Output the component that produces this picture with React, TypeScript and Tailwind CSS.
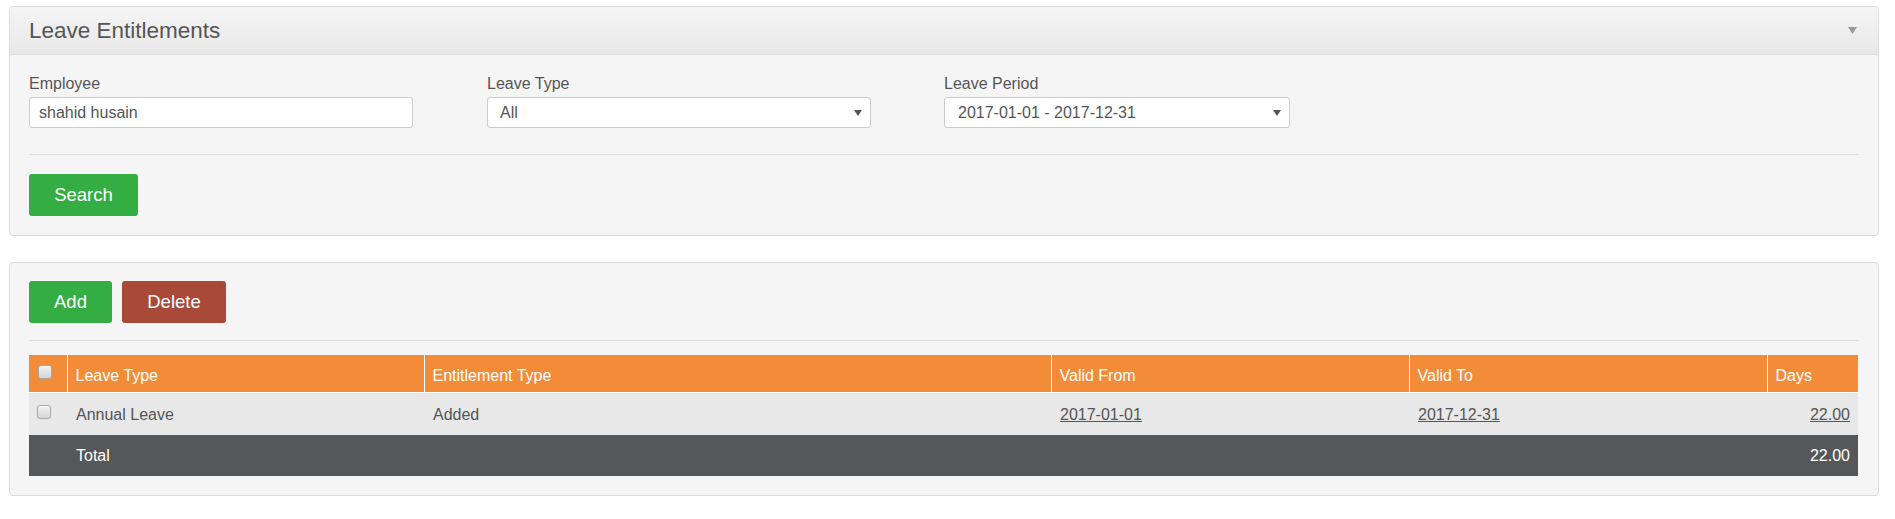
import React from "react";

const Tri = ({ w, h, color }: { w: number; h: number; color: string }) => (
  <svg width={w} height={h} viewBox={`0 0 ${w} ${h}`} className="block">
    <polygon points={`0,0 ${w},0 ${w / 2},${h}`} fill={color} />
  </svg>
);

const Check = () => (
  <span className="inline-block w-[14px] h-[14px] rounded-[3px] border border-[#a8a8a8] bg-gradient-to-b from-[#f0f0f0] to-[#d6d6d6] shadow-[inset_0_1px_1px_rgba(255,255,255,0.7)]" />
);

export default function App() {
  return (
    <div className="w-[1895px] h-[519px] bg-white font-['Liberation_Sans',Arial,sans-serif] text-[#555]">
      <div className="ml-[9px] pt-[6px] w-[1870px]">
        {/* Panel 1 */}
        <div className="border border-[#dcdcdc] rounded-[4px] bg-[#f5f5f5]">
          <div className="h-[48px] bg-gradient-to-b from-[#f5f5f5] to-[#e8e8e8] border-b border-[#dcdcdc] rounded-t-[4px] flex items-center justify-between pl-[19px] pr-[21px]">
            <span className="text-[22.5px] text-[#555] leading-none pt-[2px]">Leave Entitlements</span>
            <Tri w={9} h={7} color="#9a9a9a" />
          </div>
          <div className="px-[19px] pt-[19px] pb-[19px]">
            <div className="flex">
              <div className="w-[458px]">
                <div className="text-[16px] leading-[20px] mb-[3px]">Employee</div>
                <div className="w-[384px] h-[31px] bg-white border border-[#ccc] rounded-[3px] flex items-center pl-[9px] text-[16px] text-[#555]">
                  shahid husain
                </div>
              </div>
              <div className="w-[457px]">
                <div className="text-[16px] leading-[20px] mb-[3px]">Leave Type</div>
                <div className="w-[384px] h-[31px] bg-white border border-[#ccc] rounded-[3px] flex items-center justify-between pl-[12px] pr-[8px] text-[16px] text-[#555]">
                  <span>All</span>
                  <Tri w={8} h={6} color="#555" />
                </div>
              </div>
              <div className="w-[346px]">
                <div className="text-[16px] leading-[20px] mb-[3px]">Leave Period</div>
                <div className="w-[346px] h-[31px] bg-white border border-[#ccc] rounded-[3px] flex items-center justify-between pl-[13px] pr-[8px] text-[16px] text-[#555]">
                  <span>2017-01-01 - 2017-12-31</span>
                  <Tri w={8} h={6} color="#555" />
                </div>
              </div>
            </div>
            <div className="mt-[26px] mb-[19px] h-px bg-[#dedede] w-[1830px]" />
            <button className="w-[109px] h-[42px] bg-[#34ad43] rounded-[3px] text-white text-[18.5px]">Search</button>
          </div>
        </div>

        {/* Panel 2 */}
        <div className="mt-[26px] border border-[#dcdcdc] rounded-[4px] bg-[#f5f5f5] px-[19px] pt-[18px] pb-[19px]">
          <div className="flex gap-[10px]">
            <button className="w-[83px] h-[42px] bg-[#34ad43] rounded-[3px] text-white text-[18.5px]">Add</button>
            <button className="w-[104px] h-[42px] bg-[#a84a37] rounded-[3px] text-white text-[18.5px]">Delete</button>
          </div>
          <div className="mt-[17px] mb-[14px] h-px bg-[#dedede] w-[1830px]" />
          <table className="w-[1829px] table-fixed border-collapse text-[16px]">
            <colgroup>
              <col className="w-[38px]" />
              <col className="w-[357px]" />
              <col className="w-[627px]" />
              <col className="w-[358px]" />
              <col className="w-[358px]" />
              <col className="w-[91px]" />
            </colgroup>
            <thead>
              <tr className="bg-[#f28c39] text-white h-[37px] border-b border-white">
                <th className="text-left align-middle pl-[9px] pt-[1px]"><Check /></th>
                <th className="text-left font-normal pl-[8px] border-l border-white pt-[5px]">Leave Type</th>
                <th className="text-left font-normal pl-[8px] border-l border-white pt-[5px]">Entitlement Type</th>
                <th className="text-left font-normal pl-[8px] border-l border-white pt-[5px]">Valid From</th>
                <th className="text-left font-normal pl-[8px] border-l border-white pt-[5px]">Valid To</th>
                <th className="text-left font-normal pl-[8px] border-l border-white pt-[5px]">Days</th>
              </tr>
            </thead>
            <tbody>
              <tr className="bg-[#e8e8e8] h-[43px] text-[#555]">
                <td className="pl-[8px] align-middle"><Check /></td>
                <td className="pl-[9px] pt-[2px]">Annual Leave</td>
                <td className="pl-[9px] pt-[2px]">Added</td>
                <td className="pl-[9px] pt-[2px]"><span className="underline">2017-01-01</span></td>
                <td className="pl-[9px] pt-[2px]"><span className="underline">2017-12-31</span></td>
                <td className="pr-[8px] pt-[2px] text-right"><span className="underline">22.00</span></td>
              </tr>
              <tr className="bg-[#565759] h-[41px] text-white">
                <td></td>
                <td className="pl-[9px] pt-[1px]">Total</td>
                <td></td>
                <td></td>
                <td></td>
                <td className="pr-[8px] pt-[1px] text-right">22.00</td>
              </tr>
            </tbody>
          </table>
        </div>
      </div>
    </div>
  );
}
